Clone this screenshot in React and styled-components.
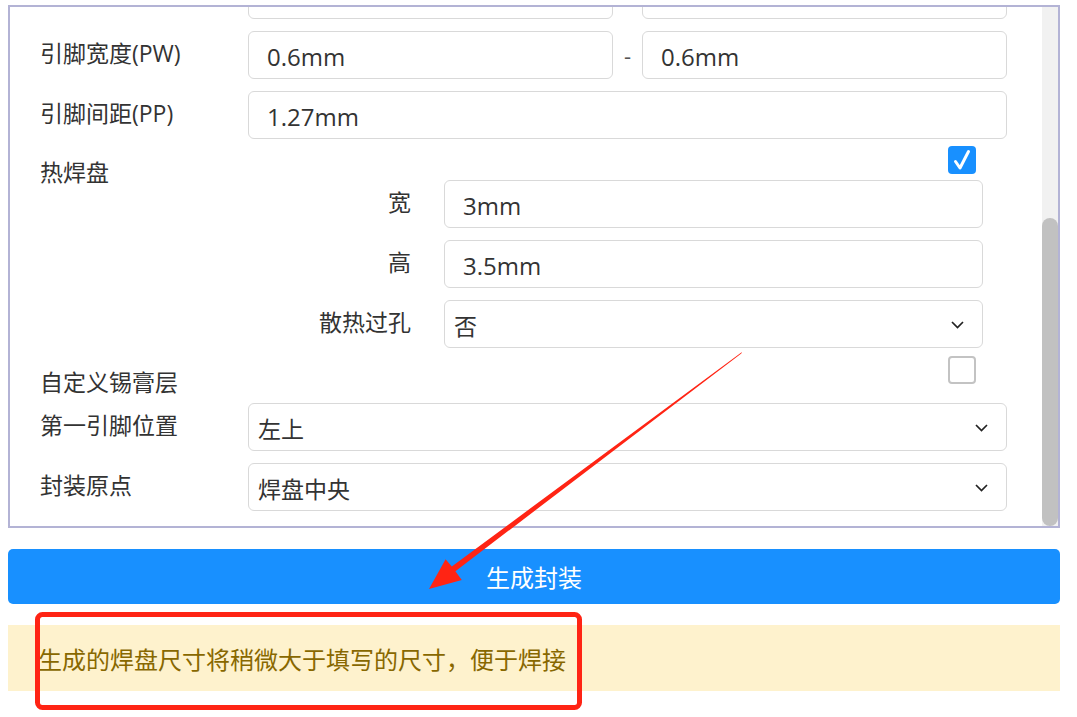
import React from "react";
import styled, { createGlobalStyle } from "styled-components";

const GlobalStyle = createGlobalStyle`
  html, body { margin: 0; padding: 0; background: #ffffff; }
  body {
    font-family: "Open Sans", "Noto Sans CJK SC", sans-serif;
    color: #333333;
  }
  * { box-sizing: border-box; }
`;

const Page = styled.div`
  position: relative;
  width: 1077px;
  height: 717px;
  padding: 5px 17px 0 8px;
  overflow: hidden;
`;

const Panel = styled.div`
  height: 523px;
  border: 2px solid #b3b3d5;
  display: flex;
  background: #ffffff;
`;

const Viewport = styled.div`
  flex: 1;
  overflow: hidden;
`;

const Form = styled.div`
  display: flex;
  flex-direction: column;
  margin-top: -36px;
  padding: 0 35px 0 30px;
`;

const Row = styled.div`
  display: grid;
  grid-template-columns: 208px 1fr;
  align-items: center;
  height: ${(p) => p.$h || 48}px;
  margin-top: ${(p) => p.$mt || 0}px;
`;

const SubRow = styled.div`
  display: grid;
  grid-template-columns: 371px 1fr;
  column-gap: 33px;
  align-items: center;
  height: 48px;
  padding-right: 24px;
  margin-top: ${(p) => p.$mt || 0}px;
`;

const CheckRow = styled.div`
  display: grid;
  grid-template-columns: 208px 1fr;
  align-items: start;
  height: ${(p) => p.$h}px;
  margin-top: ${(p) => p.$mt}px;
`;

const Label = styled.div`
  font-size: 23px;
  line-height: 34px;
  color: #333333;
  white-space: nowrap;
  margin-top: -4px;
`;

const CheckLabel = styled(Label)`
  margin-top: 9px;
`;

const SubLabel = styled(Label)`
  text-align: right;
`;

const Input = styled.div`
  height: 48px;
  border: 1.6px solid #d9d9d9;
  border-radius: 6px;
  background: #ffffff;
  display: flex;
  align-items: center;
  padding: 2px 18px 0;
  font-size: 24px;
  color: #333333;
  flex: 1;
  min-width: 0;
`;

const Select = styled.div`
  height: 48px;
  border: 1.6px solid #d9d9d9;
  border-radius: 6px;
  background: #ffffff;
  display: flex;
  align-items: center;
  justify-content: space-between;
  padding: 2px 18px 0 9px;
  font-size: 23px;
  color: #333333;
`;

const Range = styled.div`
  display: flex;
  align-items: center;
`;

const Dash = styled.span`
  width: 29px;
  text-align: center;
  font-size: 22px;
  color: #555555;
`;

const CheckBox = styled.div`
  justify-self: end;
  margin-right: 31px;
  width: 28px;
  height: 28px;
  border-radius: 4px;
  display: flex;
  align-items: center;
  justify-content: center;
  background: ${(p) => (p.$checked ? "#1890ff" : "#ffffff")};
  border: ${(p) => (p.$checked ? "none" : "2px solid #c3c3c3")};
`;

const ScrollTrack = styled.div`
  width: 16px;
  background: #f1f1f1;
  display: flex;
  flex-direction: column;
`;

const ScrollThumb = styled.div`
  margin-top: 211px;
  height: 308px;
  background: #c1c1c1;
  border-radius: 8px;
`;

const GenerateButton = styled.div`
  margin-top: 21px;
  height: 55px;
  background: #1890ff;
  border-radius: 5px;
  color: #ffffff;
  font-size: 24px;
  display: flex;
  align-items: center;
  justify-content: center;
`;

const Notice = styled.div`
  margin-top: 21px;
  height: 66px;
  background: #fef2cd;
  color: #886800;
  font-size: 24px;
  display: flex;
  align-items: center;
  padding-left: 30px;
`;

const Overlay = styled.svg`
  position: absolute;
  left: 0;
  top: 0;
  pointer-events: none;
`;

const Chevron = () => (
  <svg width="13" height="8" viewBox="0 0 13 8">
    <polyline points="1,1 6.5,6.5 12,1" fill="none" stroke="#222" strokeWidth="1.7" />
  </svg>
);

const Check = () => (
  <svg width="28" height="28" viewBox="0 0 28 28">
    <path d="M7.5 15.5 L12 22 L20.5 5.5" fill="none" stroke="#ffffff" strokeWidth="3" strokeLinecap="round" strokeLinejoin="round" />
  </svg>
);

export default function App() {
  return (
    <Page>
      <GlobalStyle />
      <Panel>
        <Viewport>
          <Form>
            <Row>
              <Label />
              <Range>
                <Input />
                <Dash />
                <Input />
              </Range>
            </Row>
            <Row $mt={12}>
              <Label>引脚宽度(PW)</Label>
              <Range>
                <Input>0.6mm</Input>
                <Dash>-</Dash>
                <Input>0.6mm</Input>
              </Range>
            </Row>
            <Row $mt={12}>
              <Label>引脚间距(PP)</Label>
              <Input>1.27mm</Input>
            </Row>
            <CheckRow $mt={7} $h={34}>
              <CheckLabel>热焊盘</CheckLabel>
              <CheckBox $checked>
                <Check />
              </CheckBox>
            </CheckRow>
            <SubRow>
              <SubLabel>宽</SubLabel>
              <Input>3mm</Input>
            </SubRow>
            <SubRow $mt={12}>
              <SubLabel>高</SubLabel>
              <Input>3.5mm</Input>
            </SubRow>
            <SubRow $mt={12}>
              <SubLabel>散热过孔</SubLabel>
              <Select>
                否
                <Chevron />
              </Select>
            </SubRow>
            <CheckRow $mt={8} $h={47}>
              <CheckLabel>自定义锡膏层</CheckLabel>
              <CheckBox />
            </CheckRow>
            <Row>
              <Label>第一引脚位置</Label>
              <Select>
                左上
                <Chevron />
              </Select>
            </Row>
            <Row $mt={12}>
              <Label>封装原点</Label>
              <Select>
                焊盘中央
                <Chevron />
              </Select>
            </Row>
          </Form>
        </Viewport>
        <ScrollTrack>
          <ScrollThumb />
        </ScrollTrack>
      </Panel>
      <GenerateButton>生成封装</GenerateButton>
      <Notice>生成的焊盘尺寸将稍微大于填写的尺寸，便于焊接</Notice>
      <Overlay width="1077" height="717" viewBox="0 0 1077 717">
        <polygon
          points="742,352 741.3,353.4 455.4,571.2 461.8,580 429,589 445.6,559.2 451.8,566.4"
          fill="#ff2414"
        />
        <rect x="37.5" y="614.5" width="542" height="93" rx="5" fill="none" stroke="#ff2414" strokeWidth="5" />
      </Overlay>
    </Page>
  );
}
